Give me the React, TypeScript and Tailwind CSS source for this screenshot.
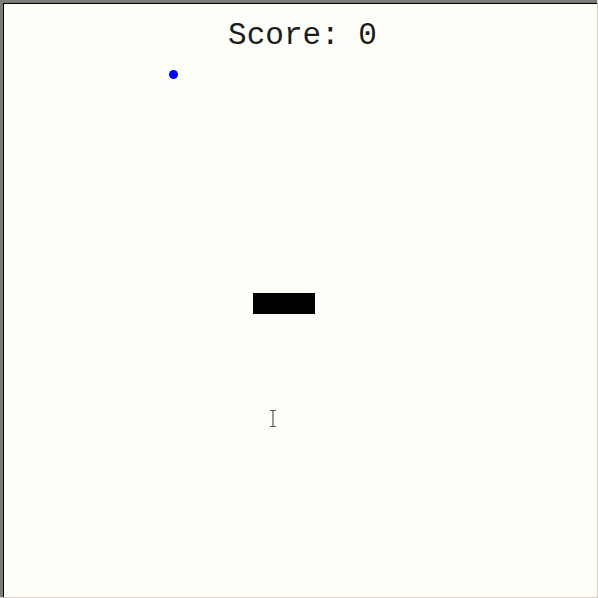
export default function App() {
  return (
    <div className="w-[598px] h-[598px] bg-[#d4d0c8]">
      <div className="w-[597px] h-[597px] border-l-[3px] border-t-[3px] border-[#7a7a7a]">
        <div className="relative w-full h-full border-l border-t border-black bg-[#fefef8] overflow-hidden">
          <div
            className="flex justify-center pt-[14px] text-[31px] leading-[36px] text-[#1c1c1c]"
            style={{ fontFamily: '"Liberation Mono", "Courier New", monospace' }}
          >
            <span className="pl-[4px]">Score: 0</span>
          </div>
          <div className="absolute left-[165px] top-[66px] w-[9px] h-[9px] rounded-full bg-[#0000ff]" />
          <div className="absolute left-[249px] top-[289px] w-[62px] h-[21px] bg-black" />
          <svg className="absolute left-[264px] top-[405px]" width="10" height="20" viewBox="0 0 10 20">
            <path d="M2 1.5H8M5 1.5V17.5M2 17.5H8" stroke="#555" strokeWidth="1.2" fill="none" />
          </svg>
        </div>
      </div>
    </div>
  );
}
